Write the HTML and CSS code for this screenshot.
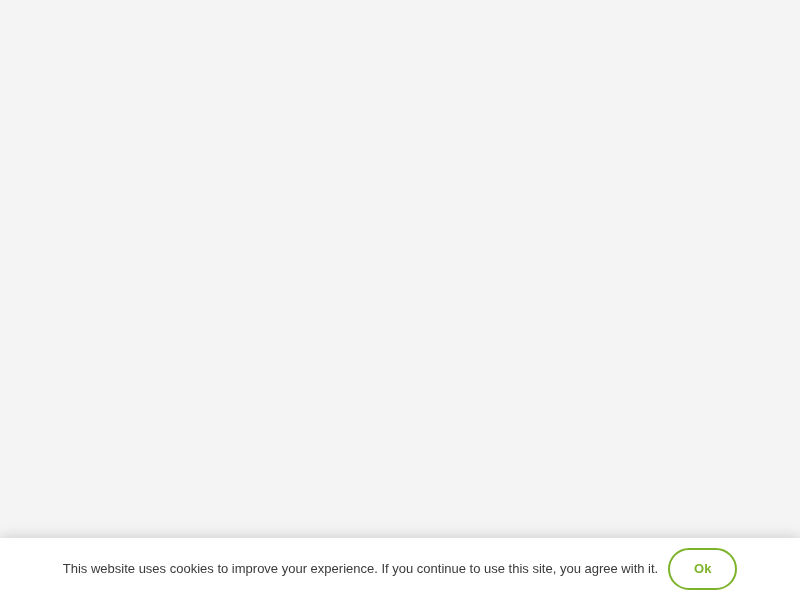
FILE: index.html
```html
<!DOCTYPE html>
<html>
<head>
<meta charset="utf-8">
<link rel="stylesheet" href="styles.css">
</head>
<body>
<div class="page"></div>
<div class="cookie-bar">
  <p class="cookie-text">This website uses cookies to improve your experience. If you continue to use this site, you agree with it.</p>
  <button class="cookie-ok">Ok</button>
</div>
</body>
</html>
```

FILE: styles.css
```css
html, body {
  margin: 0;
  padding: 0;
  height: 100%;
  background: #f4f4f4;
  font-family: "Liberation Sans", Arial, sans-serif;
}
.page {
  height: 538px;
}
.cookie-bar {
  position: fixed;
  left: 0;
  right: 0;
  bottom: 0;
  height: 62px;
  background: #fff;
  box-shadow: 0 0 14px rgba(0, 0, 0, 0.18);
  display: flex;
  align-items: center;
  justify-content: center;
  gap: 10px;
}
.cookie-text {
  margin: 0 0 2px 0;
  font-size: 13px;
  color: #3a3a3a;
}
.cookie-ok {
  width: 69px;
  height: 42px;
  border: 2px solid #7db32a;
  border-radius: 21px;
  background: #fff;
  color: #7db32a;
  font-family: "Liberation Sans", Arial, sans-serif;
  font-weight: bold;
  font-size: 13px;
  padding: 0 0 2px 0;
  cursor: pointer;
}
```
